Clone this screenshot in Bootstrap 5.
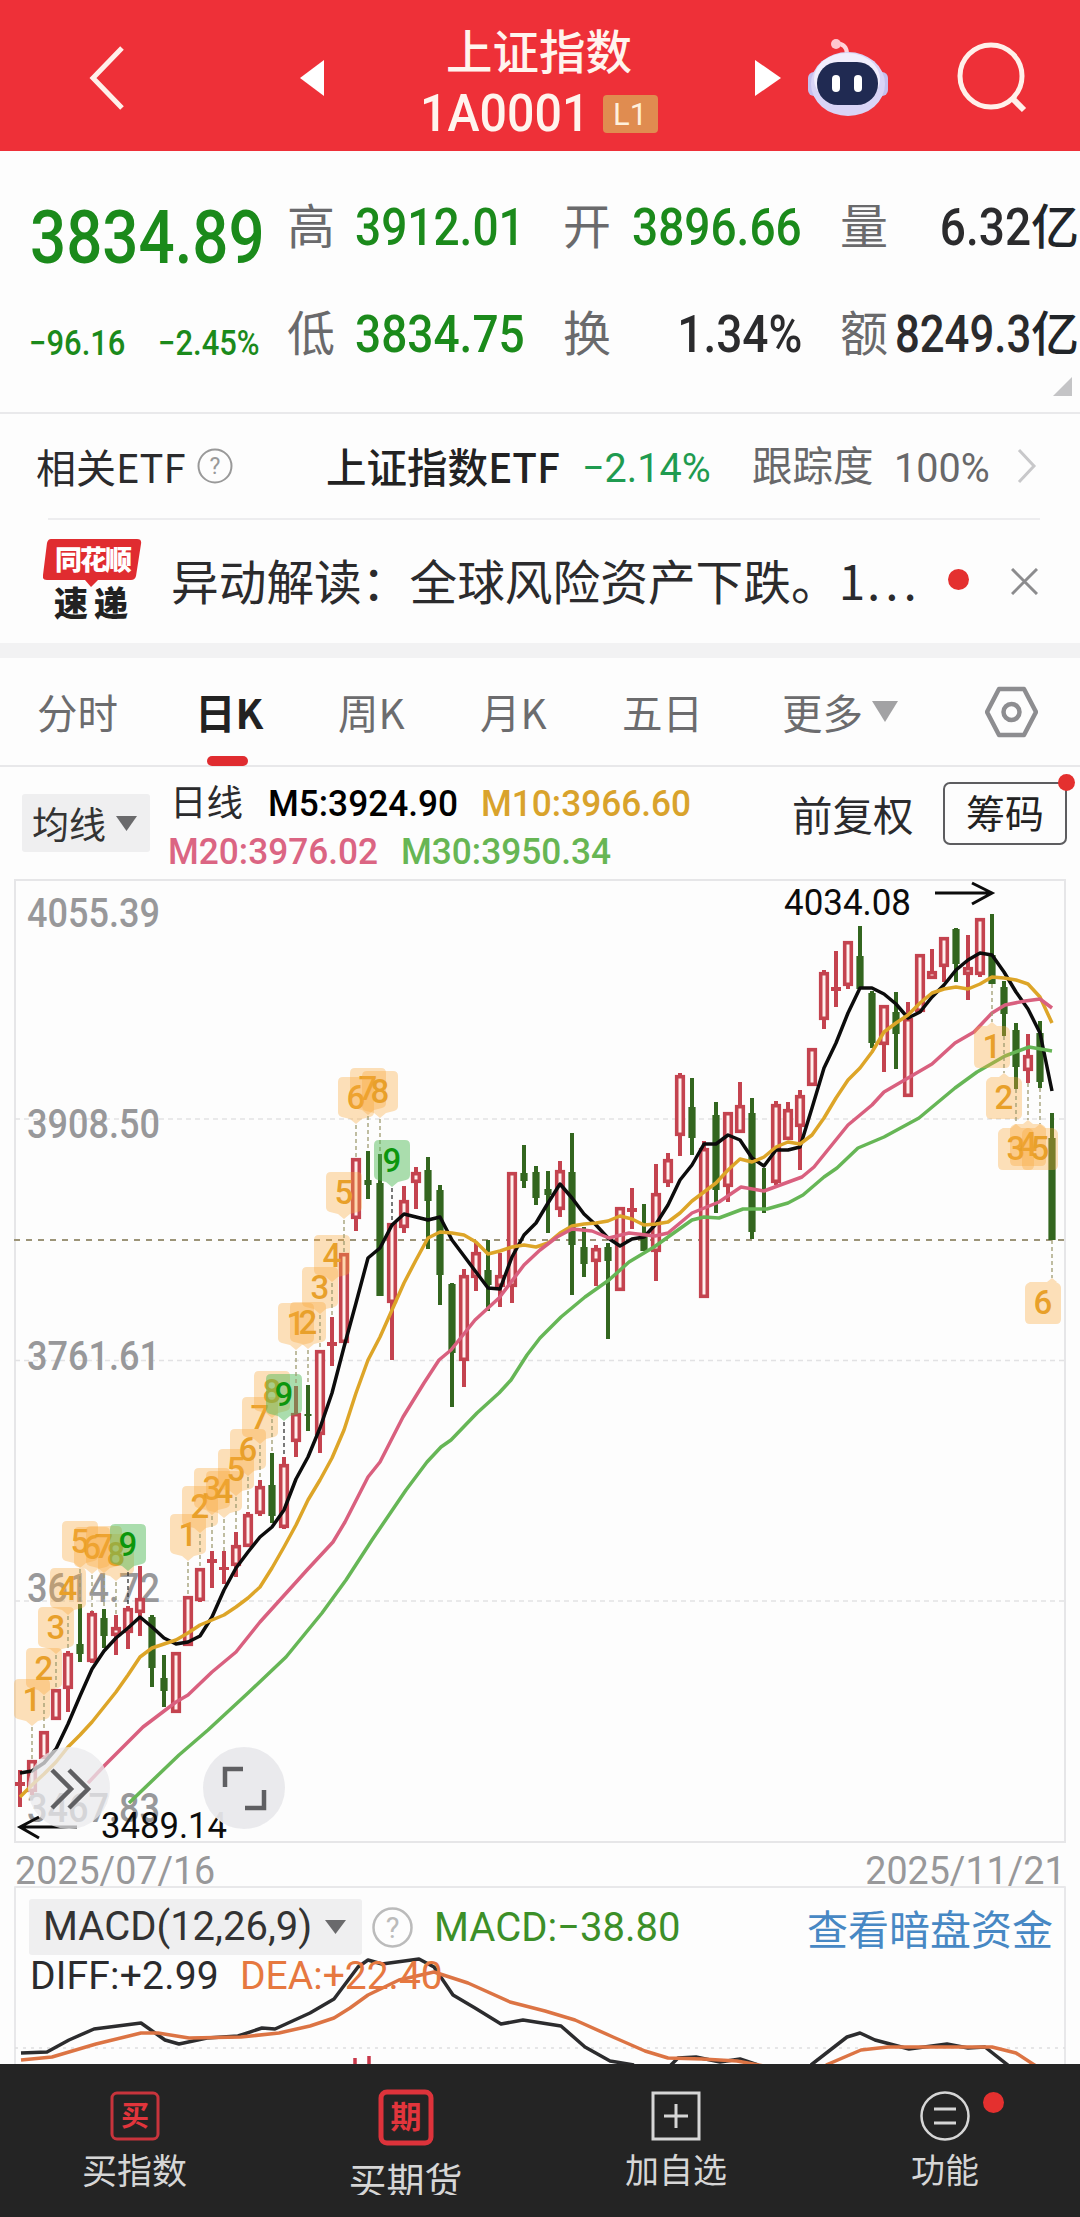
<!DOCTYPE html>
<html lang="zh-CN">
<head>
<meta charset="utf-8">
<meta name="viewport" content="width=device-width, initial-scale=1">
<title>上证指数 1A0001</title>
<link href="https://cdn.jsdelivr.net/npm/bootstrap@5.3.0/dist/css/bootstrap.min.css" rel="stylesheet">
<style>
body{width:1080px;height:2217px;overflow:hidden;background:#fdfdfd;color:#2b2b2d;font-family:Roboto,"Noto Sans CJK SC",sans-serif;font-size:40.5px;line-height:1}
.cjk{font-family:"Noto Sans CJK SC",sans-serif}
svg{display:block;flex:none}
.rowgrid{display:grid;align-items:center;white-space:nowrap}
.nx{display:inline-block;transform-origin:left center;white-space:nowrap}
.nx-r{transform-origin:right center}
.w83{transform:scaleX(.84)}.w86{transform:scaleX(.86)}.w88{transform:scaleX(.885)}.w92{transform:scaleX(.93)}.w96{transform:scaleX(.965)}
.up-grn{color:#1b8a1b}
.topbar{height:151px;background:#ee3038;color:#fff4ee;grid-template-columns:89px 211px 75px 304px 75px 53px 150px 70px;padding-top:6px}
.title-box{margin-left:24px;padding-top:14px}
.title-cn{font-size:46.5px;font-weight:500;height:58px;line-height:50px}
.title-code{font-size:52px;font-weight:500;height:56px;line-height:56px}
.lv-tag{width:55px;height:38px;background:#e08c50;border-radius:4px;font-size:31px;font-weight:400;line-height:39px;color:#fff0dc;text-align:center}
.quote{height:263px;border-bottom:2px solid #e9e9eb;grid-template-columns:287px 68px 208px 69px 208px 48px 191px;grid-template-rows:107px 107px;padding-top:24px}
.q-label{font-size:48px;color:#6a6a6c}
.q-num{font-size:52px;font-weight:500}
.q-price{font-size:74px;font-weight:500}
.q-chg{font-size:35px;font-weight:500}
.etf{height:105px;grid-template-columns:36px 161px 129px 256px 170px 142px 122px 30px}
.hair{height:2px;margin:-1px 40px 0 48px;background:#ededef}
.news{height:124px;grid-template-columns:43px 128px 777px 63px 30px;font-size:47.7px}
.band{height:15px;background:#f2f2f3}
.tabs{height:109px;border-bottom:2px solid #e8e8ea;grid-template-columns:37px 158px 143px 142px 142px 160px 90px 113px 55px;font-size:40.5px;color:#6c6c6e}
.tab-on{color:#222;font-weight:700}
.tab-on::after{content:"";position:absolute;left:12px;top:64px;width:41px;height:10px;border-radius:5px;background:#e02c30}
.avg{height:112px;grid-template-columns:22px 148px 622px 151px 122px}
.chip{background:#efeff0;border-radius:3px;color:#333}
.ma-lines{font-size:36.5px;font-weight:500}
.ma-lines .rowgrid{height:48px}
.chips-btn{width:124px;height:63px;border:2px solid #5d5d60;border-radius:7px;font-size:39px;color:#222}
.red-dot{border-radius:50%;background:#e4302f}
.dates{height:43px;padding:14px 14px 0 15px;font-size:39px;color:#98989a}
.macd{height:178px}
.macd-head{height:58px;grid-template-columns:29px 343px 62px 373px 250px}
.macd-sub{height:40px;grid-template-columns:30px 210px 300px;font-size:39px}
.navbtm{height:153px;background:#242424;color:#d6d6d6;grid-template-columns:269px 273px 268px 270px}
.navbtm>div{height:153px;padding-top:27px}
.nav-ic{height:50px}
.nav-tx{font-size:35px;line-height:44px;margin-top:6px}
</style>
<script src="https://cdn.jsdelivr.net/npm/bootstrap@5.3.0/dist/js/bootstrap.bundle.min.js"></script>
</head>
<body class="d-flex flex-column">

<header class="topbar rowgrid">
  <span></span>
  <svg width="40" height="66" viewBox="0 0 40 66"><path d="M33 3 4 33 33 63" fill="none" stroke="#fff0ea" stroke-width="5"/></svg>
  <svg width="24" height="36" viewBox="0 0 24 36"><path d="M24 0V36L0 18z" fill="#fff"/></svg>
  <div class="title-box d-flex flex-column align-items-center">
    <div class="title-cn">上证指数</div>
    <div class="title-code d-flex align-items-center justify-content-center"><span class="nx w92">1A0001</span><span class="lv-tag">L1</span></div>
  </div>
  <svg width="26" height="36" viewBox="0 0 26 36" class="ms-auto me-0" style="transform:translateX(27px)"><path d="M0 0V36L26 18z" fill="#fff"/></svg>
  <span></span>
  <svg width="84" height="80" viewBox="0 0 84 80">
    <path d="M40 16Q40 6 29 5" fill="none" stroke="#ffd3da" stroke-width="4"/><circle cx="29" cy="6" r="5" fill="#ffc6cf"/>
    <rect x="1" y="34" width="12" height="24" rx="6" fill="#c4c0ee"/><rect x="69" y="34" width="12" height="24" rx="6" fill="#c4c0ee"/>
    <ellipse cx="41" cy="46" rx="37" ry="32" fill="#d9d4f6"/><ellipse cx="40" cy="41" rx="33" ry="26" fill="#f1eefd"/>
    <rect x="10" y="24" width="61" height="43" rx="21" fill="#202a52"/>
    <rect x="25" y="37" width="8" height="17" rx="4" fill="#fff"/><rect x="47" y="37" width="8" height="17" rx="4" fill="#fff"/>
  </svg>
  <svg width="72" height="72" viewBox="0 0 72 72"><circle cx="34" cy="34" r="31" fill="none" stroke="#fff0ea" stroke-width="5"/><path d="M54 55 67 68" stroke="#fff0ea" stroke-width="6"/></svg>
</header>

<section class="quote rowgrid position-relative">
  <div class="ps-4"><span class="nx w86 q-price up-grn" style="margin-left:6px;margin-top:20px">3834.89</span></div>
  <div class="q-label">高</div><div><span class="nx w88 q-num up-grn">3912.01</span></div>
  <div class="q-label">开</div><div><span class="nx w88 q-num up-grn">3896.66</span></div>
  <div class="q-label">量</div><div class="d-flex align-items-center justify-content-end"><span class="nx nx-r w88 q-num">6.32</span><span class="q-label text-dark fw-medium">亿</span></div>
  <div class="d-flex q-chg up-grn" style="padding:16px 0 0 29px"><span class="nx w88" style="width:129px">−96.16</span><span class="nx w88">−2.45%</span></div>
  <div class="q-label">低</div><div><span class="nx w88 q-num up-grn">3834.75</span></div>
  <div class="q-label">换</div><div class="text-end" style="padding-right:38px"><span class="nx nx-r w88 q-num">1.34%</span></div>
  <div class="q-label">额</div><div class="d-flex align-items-center justify-content-end"><span class="nx nx-r w83 q-num">8249.3</span><span class="q-label text-dark fw-medium">亿</span></div>
  <svg class="position-absolute end-0 bottom-0 me-2 mb-3" width="19" height="19"><path d="M19 0V19H0z" fill="#c4c4c6"/></svg>
</section>

<section class="etf rowgrid">
  <span></span><span class="cjk" style="font-size:40px">相关ETF</span>
  <svg width="36" height="36" viewBox="0 0 36 36"><circle cx="18" cy="18" r="16.5" fill="none" stroke="#999" stroke-width="2"/><text x="18" y="26" font-size="23" text-anchor="middle" fill="#999">?</text></svg>
  <span class="cjk fw-medium" style="color:#222">上证指数ETF</span>
  <span style="padding-top:4px"><span class="nx w96" style="color:#1f9b50;font-size:41px">−2.14%</span></span>
  <span style="color:#68686a;padding-top:3px">跟踪度</span><span class="nx w96" style="color:#68686a;font-size:41px;padding-top:4px">100%</span>
  <svg width="22" height="36" viewBox="0 0 20 36"><path d="M2 2 17 18 2 34" fill="none" stroke="#c8c8ca" stroke-width="3"/></svg>
</section>
<div class="hair"></div>

<section class="news rowgrid">
  <span></span>
  <svg width="100" height="84" viewBox="0 0 100 84">
    <path d="M8 0H94Q99 0 98 5L93 37Q92 41 88 41H55L48 48 42 41H4Q-1 41 0 36L4 4Q5 0 8 0z" fill="#e02c30"/>
    <text x="12" y="31" font-size="27" font-weight="900" fill="#fff" textLength="77">同花顺</text>
    <text x="11" y="77" font-size="34" font-weight="900" fill="#222" textLength="74">速递</text>
  </svg>
  <span class="cjk" style="margin-top:-3px">异动解读：全球风险资产下跌。1<span style="letter-spacing:5px;margin-left:2px">...</span></span>
  <span class="red-dot" style="width:21px;height:21px;margin-top:-3px"></span>
  <svg width="27" height="27" viewBox="0 0 27 27"><path d="M1 1 26 26M26 1 1 26" stroke="#8c8c8e" stroke-width="3"/></svg>
</section>
<div class="band"></div>

<nav class="tabs rowgrid cjk">
  <span></span><span>分时</span><span class="tab-on position-relative">日K</span><span>周K</span><span>月K</span><span>五日</span><span>更多</span>
  <svg width="26" height="21"><path d="M0 0H26L13 21z" fill="#a2a2a4"/></svg>
  <svg width="53" height="52" viewBox="0 0 53 52"><path d="M14 3H39L51 26 39 49H14L2 26z" fill="none" stroke="#8d8d90" stroke-width="4.500" stroke-linejoin="round"/><circle cx="26.500" cy="26" r="8" fill="none" stroke="#8d8d90" stroke-width="4.500"/></svg>
</nav>

<section class="avg rowgrid">
  <span></span>
  <div class="chip d-flex align-items-center cjk" style="width:128px;height:58px;padding-left:10px;font-size:37px"><span>均线</span><svg width="21" height="15" style="margin-left:10px"><path d="M0 0H21L10.500 15z" fill="#6a6a6c"/></svg></div>
  <div class="ma-lines" style="margin-top:10px">
    <div class="rowgrid" style="grid-template-columns:98px 213px 300px"><span class="fw-normal" style="font-size:36.500px">日线</span><span class="nx w96 text-black">M5:3924.90</span><span class="nx w96" style="color:#d9a32c">M10:3966.60</span></div>
    <div class="rowgrid" style="grid-template-columns:233px 300px;margin-left:-2px"><span class="nx w96" style="color:#db6583">M20:3976.02</span><span class="nx w96" style="color:#67b654">M30:3950.34</span></div>
  </div>
  <span style="margin-top:-12px">前复权</span>
  <div class="chips-btn d-flex align-items-center justify-content-center position-relative" style="margin-top:-20px"><span style="padding-top:5px">筹码</span><span class="red-dot position-absolute" style="width:17px;height:17px;right:-10px;top:-10px"></span></div>
</section>

<svg id="kchart" width="1080" height="964" viewBox="0 879 1080 964" font-family="Roboto,sans-serif"></svg>

<div class="dates d-flex justify-content-between align-items-center"><span class="nx w96">2025/07/16</span><span class="nx nx-r w96">2025/11/21</span></div>

<section class="macd position-relative">
  <svg class="position-absolute top-0 start-0" width="1080" height="178" viewBox="0 1886 1080 178" fill="none" stroke-width="3.500" stroke-linejoin="round">
    <path d="M15 2064V1887H1065V2064" stroke="#e8e8ea" stroke-width="2"/>
    <path d="M15 2048H1065" stroke="#dedee0" stroke-width="1.500" stroke-dasharray="3 5"/>
    <path d="M21 2053 47 2052 69 2040 94 2029 141 2023 165 2040 179 2044 207 2038 238 2036 262 2028 275 2029 310 2013 334 1999 358 1967 368 1960 382 1964 419 1959 434 1967 453 1995 475 2008 501 2024 523 2020 561 2026 585 2047 610 2061 634 2065M669 2067 678 2058 696 2057 720 2062 740 2059 758 2065M811 2065 847 2037 860 2033 875 2040 909 2049 947 2044 968 2048 985 2047 1009 2066" stroke="#2c2c2e"/>
    <path d="M21 2060 52 2057 96 2044 141 2033 158 2033 189 2038 241 2037 279 2033 310 2026 334 2018 350 2008 368 1995 399 1980 434 1972 468 1983 510 2002 545 2011 575 2020 613 2037 645 2051 668 2058 702 2059 737 2061 764 2066M826 2065 861 2050 888 2047 992 2047 1016 2053 1036 2066" stroke="#dc7444"/>
    <path d="M355 2058V2064M369 2056V2064" stroke="#c8384a"/>
  </svg>
  <div class="position-relative" style="padding-top:12px">
    <div class="macd-head rowgrid">
      <span></span>
      <div class="chip d-flex align-items-center" style="width:333px;height:56px;padding-left:14px;font-size:40px"><span class="nx" style="width:282px">MACD(12,26,9)</span><svg width="21" height="14"><path d="M0 0H21L10.500 14z" fill="#6a6a6c"/></svg></div>
      <svg width="41" height="41" viewBox="0 0 41 41"><circle cx="20.500" cy="20.500" r="19" fill="none" stroke="#bbb" stroke-width="2.500"/><text x="20.500" y="31" font-size="29" text-anchor="middle" fill="#bbb">?</text></svg>
      <span style="color:#3c8f28;font-size:40px;padding-top:2px">MACD:−38.80</span>
      <span class="cjk" style="color:#4788c4;font-size:41px">查看暗盘资金</span>
    </div>
    <div class="macd-sub rowgrid"><span></span><span style="letter-spacing:.2px">DIFF:+2.99</span><span style="color:#e67840">DEA:+22.40</span></div>
  </div>
</section>

<nav class="navbtm rowgrid cjk">
  <div class="d-flex flex-column align-items-center">
    <svg class="nav-ic" width="50" height="50" viewBox="0 0 50 50"><rect x="2" y="2" width="46" height="46" rx="5" fill="none" stroke="#c8343c" stroke-width="3"/><text x="25" y="35" font-size="28" font-weight="700" text-anchor="middle" fill="#e2353c">买</text></svg>
    <div class="nav-tx">买指数</div>
  </div>
  <div class="d-flex flex-column align-items-center" style="padding-top:25px">
    <svg width="56" height="57" viewBox="0 0 56 57"><rect x="3" y="3" width="50" height="51" rx="6" fill="none" stroke="#dd333b" stroke-width="5"/><text x="28" y="39" font-size="31" font-weight="700" text-anchor="middle" fill="#e2353c">期</text></svg>
    <div class="nav-tx overflow-hidden" style="font-size:38px;height:38px;margin-top:11px">买期货</div>
  </div>
  <div class="d-flex flex-column align-items-center">
    <svg class="nav-ic" width="50" height="50" viewBox="0 0 50 50"><path d="M2 2H48V48H2zM25 13V37M13 25H37" fill="none" stroke="#d6d6d6" stroke-width="3"/></svg>
    <div class="nav-tx" style="font-size:34px">加自选</div>
  </div>
  <div class="d-flex flex-column align-items-center position-relative">
    <svg class="nav-ic" width="50" height="50" viewBox="0 0 50 50"><circle cx="25" cy="25" r="23.500" fill="none" stroke="#d6d6d6" stroke-width="2.500"/><path d="M14 18H36M14 32H36" stroke="#d6d6d6" stroke-width="3"/></svg>
    <div class="nav-tx" style="font-size:34px">功能</div>
    <span class="red-dot position-absolute" style="width:21px;height:21px;left:173px;top:28px"></span>
  </div>
</nav>

<script>
// candles: [high, body top, body bottom, low, 1 = rising / 0 = falling], one per trading day
const candles=[[1770,1782,1786,1807,1],[1760,1760,1792,1795,1],[1731,1731,1759,1759,1],[1689,1689,1720,1720,1],[1651,1653,1689,1712,1],[1604,1644,1654,1662,0],[1611,1613,1662,1663,1],[1609,1618,1636,1648,0],[1615,1627,1636,1655,1],[1606,1608,1633,1649,1],[1566,1598,1613,1636,1],[1615,1617,1668,1687,0],[1655,1678,1691,1707,0],[1652,1652,1713,1713,1],[1596,1596,1646,1646,1],[1568,1568,1601,1602,1],[1551,1559,1563,1588,1],[1551,1567,1570,1584,1],[1532,1545,1566,1577,1],[1512,1514,1547,1547,1],[1480,1486,1514,1516,1],[1453,1485,1516,1523,0],[1457,1464,1528,1529,1],[1386,1413,1442,1457,1],[1385,1414,1416,1431,0],[1350,1350,1435,1453,1],[1317,1342,1346,1366,1],[1253,1253,1343,1343,1],[1158,1158,1219,1231,1],[1151,1180,1185,1199,0],[1154,1183,1296,1296,0],[1223,1223,1303,1360,1],[1186,1200,1228,1233,1],[1167,1172,1183,1209,1],[1157,1170,1201,1249,0],[1185,1190,1275,1305,0],[1283,1284,1353,1407,0],[1269,1275,1361,1387,1],[1243,1252,1278,1291,1],[1240,1270,1285,1311,0],[1253,1275,1287,1307,1],[1172,1172,1287,1303,1],[1145,1173,1181,1188,0],[1166,1172,1198,1205,0],[1171,1189,1195,1233,0],[1161,1170,1210,1217,1],[1133,1172,1245,1295,0],[1227,1247,1264,1277,0],[1245,1248,1262,1286,1],[1243,1247,1261,1339,0],[1207,1207,1291,1291,1],[1188,1208,1212,1229,1],[1204,1233,1251,1251,0],[1164,1193,1252,1281,1],[1153,1159,1183,1187,1],[1073,1075,1136,1156,1],[1078,1107,1138,1155,0],[1141,1148,1298,1298,1],[1102,1115,1190,1213,0],[1112,1112,1187,1202,1],[1082,1105,1133,1133,1],[1098,1113,1232,1239,0],[1168,1168,1168,1213,0],[1101,1104,1183,1185,1],[1102,1109,1140,1140,1],[1090,1095,1127,1170,1],[1048,1048,1086,1086,1],[970,972,1020,1029,1],[951,987,991,1007,1],[941,941,986,989,1],[926,956,989,989,0],[991,993,1043,1048,0],[1005,1005,1045,1072,1],[992,1012,1034,1069,0],[1002,1018,1097,1097,1],[954,954,1012,1013,1],[949,971,979,979,1],[937,937,967,982,1],[928,929,964,982,0],[935,967,975,1000,1],[918,918,975,977,1],[914,955,984,984,0],[981,987,1014,1036,0],[1023,1030,1067,1089,0],[1034,1055,1071,1083,1],[1021,1033,1082,1088,0],[1113,1138,1240,1240,0]];
// averages that have one value per trading day
const ma5=[1773,1771,1763,1749,1724,1696,1669,1651,1638,1628,1617,1627,1638,1644,1642,1636,1617,1590,1568,1552,1537,1527,1510,1479,1457,1428,1393,1347,1303,1258,1248,1225,1214,1217,1220,1217,1240,1256,1272,1288,1289,1257,1235,1223,1203,1184,1198,1214,1225,1238,1246,1239,1237,1224,1205,1180,1165,1144,1144,1135,1140,1158,1166,1150,1150,1147,1108,1068,1043,1013,988,988,994,1004,1018,1012,997,985,970,960,953,955,972,992,1009,1033,1091];
const ma10=[1797,1785,1774,1762,1747,1735,1722,1707,1692,1675,1657,1648,1644,1640,1633,1625,1620,1615,1607,1598,1587,1568,1547,1525,1500,1480,1458,1430,1393,1360,1337,1310,1283,1260,1238,1232,1233,1235,1242,1254,1251,1247,1245,1247,1243,1233,1226,1224,1223,1221,1216,1219,1225,1224,1222,1213,1201,1192,1183,1170,1159,1162,1157,1147,1142,1144,1135,1118,1098,1080,1068,1052,1032,1023,1015,1003,993,989,987,989,984,977,978,980,984,997,1023];
const ma20="88,1783 105,1765 143,1727 176,1702 188,1695 212,1672 236,1652 260,1622 298,1580 307,1570 333,1542 345,1522 368,1477 380,1462 403,1417 424,1383 439,1360 451,1350 475,1320 499,1298 524,1265 540,1250 557,1237 572,1229 592,1231 609,1238 629,1233 655,1236 668,1233 692,1213 719,1202 741,1187 764,1191 802,1177 814,1167 848,1125 872,1105 884,1092 908,1078 932,1064 955,1043 974,1032 992,1013 1005,1005 1025,1001 1040,999 1052,1008";
const ma30="129,1803 179,1755 208,1730 248,1693 286,1657 322,1613 346,1580 372,1540 406,1490 427,1462 441,1447 451,1440 477,1413 499,1393 511,1380 527,1355 540,1338 561,1317 585,1297 609,1280 629,1262 654,1247 692,1220 704,1217 719,1218 743,1209 767,1209 788,1203 803,1195 824,1177 837,1168 858,1148 884,1137 919,1118 955,1088 977,1072 1005,1056 1029,1047 1052,1051";
// count tags: [day index, tag top, digit]
const above=[[1,1679,1],[2,1648,2],[3,1607,3],[4,1568,4],[5,1521,5],[6,1527,6],[7,1526,7],[8,1534,8],[9,1524,9],[14,1514,1],[15,1486,2],[16,1468,3],[17,1471,4],[18,1449,5],[19,1429,6],[20,1397,7],[21,1371,8],[22,1374,9],[23,1303,1],[24,1302,2],[25,1267,3],[26,1235,4],[27,1172,5],[28,1077,6],[29,1068,7],[30,1071,8],[31,1140,9]];
const below=[[81,1022,1],[82,1073,2],[83,1124,3],[84,1120,4],[85,1124,5],[86,1278,6]];
const X=i=>20+12*i;
let s='<rect x="15" y="880" width="1050" height="962" fill="none" stroke="#e6e6e8" stroke-width="2"/>';
for(const y of [1119,1360.5,1601]) s+=`<path d="M15 ${y}H1065" stroke="#e2e2e4" stroke-width="1.5" stroke-dasharray="5 4"/>`;
s+='<path d="M14 1240H1065" stroke="#9c9478" stroke-width="2" stroke-dasharray="6 6"/>';
const label=(x,y,w,t,c,f,b)=>`<text x="${x}" y="${y}" font-size="${f}" font-weight="${b}" fill="${c}" textLength="${w}" lengthAdjust="spacingAndGlyphs">${t}</text>`;
[[927,'4055.39'],[1138,'3908.50'],[1370,'3761.61'],[1602,'3614.72'],[1822,'3467.83']].forEach(([y,t])=>s+=label(27,y,133,t,'#98989a',40,500));
candles.forEach(([h,t,b,l,up],i)=>{
  const x=X(i),c=up?'#c4434f':'#33661f';
  s+=`<path d="M${x} ${h}V${up?t:l}${up?`M${x} ${b}V${l}`:''}" stroke="${c}" stroke-width="4"/>`;
  if(b-t>7&&up) s+=`<rect x="${x-3.300}" y="${t+1.7}" width="6.600" height="${b-t-3.4}" fill="#fff0ee" stroke="${c}" stroke-width="3.600"/>`;
  else if(b>t) s+=`<rect x="${x-(b-t<3?3.5:up?5:3.6)}" y="${t}" width="${b-t<3?7:up?10:7.2}" height="${b-t}" fill="${c}"/>`;
});
const line=(p,c)=>`<polyline points="${p}" fill="none" stroke="${c}" stroke-width="3.500" stroke-linejoin="round"/>`;
s+=line(ma5.map((y,i)=>X(i)+','+y).join(' '),'#0c0c0c')+line(ma10.map((y,i)=>X(i)+','+y).join(' '),'#dda528')+line(ma20,'#d9607f')+line(ma30,'#66b656');
const digit=(x,y,n)=>`<text x="${x}" y="${y}" font-size="33" text-anchor="middle" fill="${n==9?'#0c960c':'#e8a02a'}" font-weight="500">${n}</text>`;
above.forEach(([i,y,n])=>{
  const x=X(i),g=n==9;
  s+=`<path d="M${x} ${y+48}V${candles[i][0]}" stroke="${g?'#333':'#9f9b70'}" stroke-width="1.3" stroke-dasharray="4 3"/><path d="M${x-13} ${y}h26q5 0 5 5v30q0 4-4 5l-8 2-6 5-6-5-8-2q-4-1-4-5v-30q0-5 5-5z" fill="${g?'#4fbb56':'#f9a93d'}" fill-opacity="${g?.48:.36}"/>`+digit(x,y+32,n);
});
below.forEach(([i,y,n])=>{
  const x=X(i),c=i==86?x-9:x;
  s+=`<path d="M${x} ${candles[i][3]}V${y}" stroke="#9f9b70" stroke-width="1.3" stroke-dasharray="4 3"/><path d="M${x} ${y}l5 4H${c+13}q5 2 5 6v31q0 5-5 5h-26q-5 0-5-5v-31q0-4 5-6H${x-5}z" fill="#f9a93d" fill-opacity=".36"/>`+digit(c,y+36,n);
});
s+=label(784,915,127,'4034.08','#0c0c0c',36,400)+label(101,1838,126,'3489.14','#0c0c0c',36,400);
s+='<path d="M935 893H992M972 883 992 893 972 904M77 1827H20M39 1817 20 1827 39 1838" fill="none" stroke="#0c0c0c" stroke-width="3"/>';
s+='<g fill="#e9e9ec" fill-opacity=".75"><circle cx="69" cy="1788" r="41"/><circle cx="244" cy="1788" r="41" fill-opacity=".95"/></g>';
s+='<path d="M52 1770 71 1789 52 1808M69 1770 88 1789 69 1808M225 1787V1769H243M245 1808H264V1790" fill="none" stroke="#5f5f62" stroke-width="4.500"/>';
document.getElementById('kchart').innerHTML=s;
</script>
</body>
</html>
